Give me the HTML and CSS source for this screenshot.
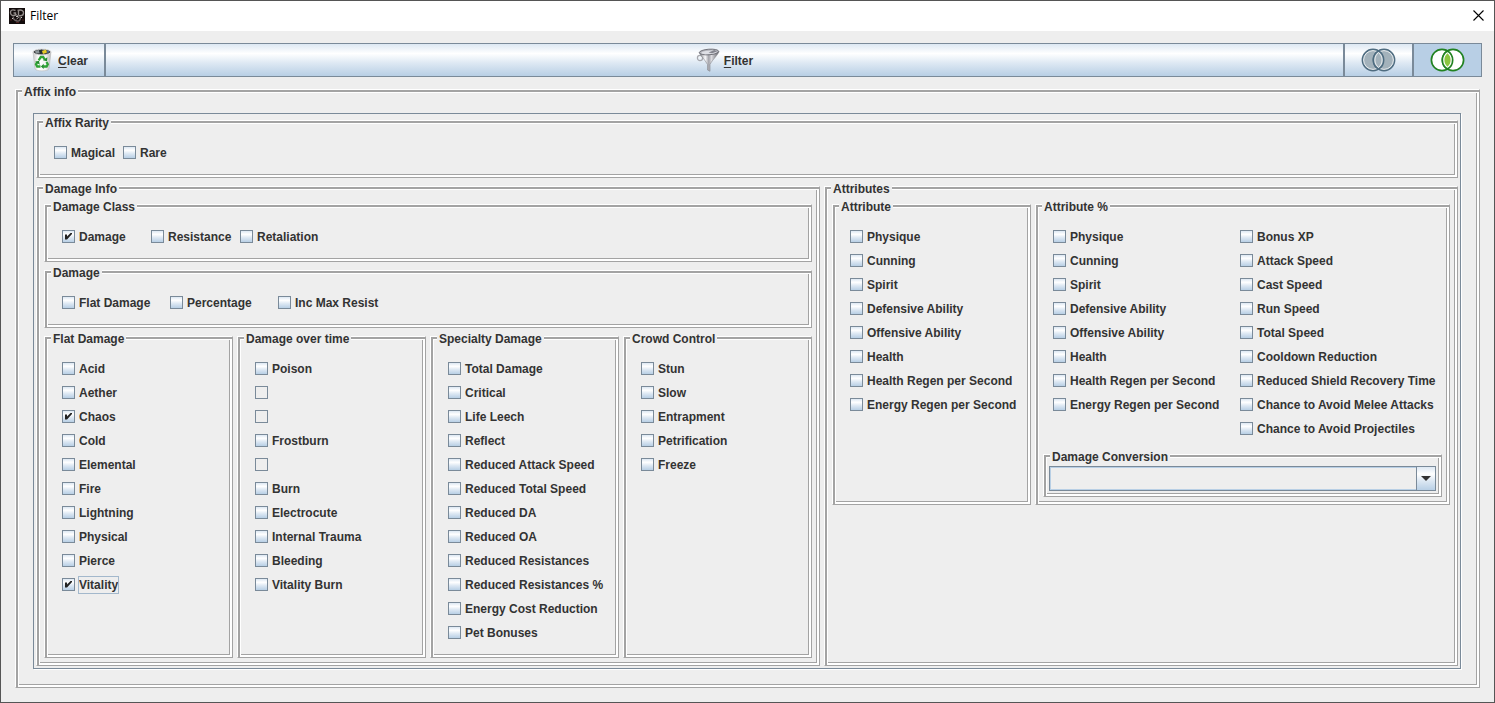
FILE: index.html
```html
<!DOCTYPE html>
<html lang="en">
<head>
<meta charset="utf-8">
<title>Filter</title>
<link rel="stylesheet" href="styles.css">
</head>
<body>
<div class="window">
  <header class="titlebar">
    <svg class="app-icon" viewBox="0 0 16 16" aria-hidden="true">
      <rect width="16" height="16" fill="#120c0c"/>
      <g fill="none" stroke="#918b89" stroke-width="1.4">
        <path d="M6.500 2.500C3 1 1.200 2.500 1.500 5S4 8 6.500 7V5H4.500"/>
        <path d="M9.500 2.500V7.500M8.500 2.500C13 1.200 15 3 14.500 5.500S12 8 9.500 7.500"/>
        <path d="M4.500 8.500c-1 2 1 4 3.500 4.500s4-1.500 3-4" stroke="#6b6262"/>
        <path d="M7.500 6.500l2 3-2 1.500" stroke="#aaa5a3" stroke-width="1"/>
      </g>
      <path d="M7 8h2v1H7zM12 9h1v1h-1zM3 10h1v1H3z" fill="#c9c4c2"/>
      <path d="M1 12h2M13 12h2M7 14.500h3" stroke="#4d2020"/>
    </svg>
    <h1 class="title">Filter</h1>
    <button class="close" type="button" aria-label="Close">
      <svg viewBox="0 0 11 11" width="11" height="11"><path d="M.5.5l10 10M10.500.5l-10 10" fill="none" stroke="#000" stroke-width="1.1"/></svg>
    </button>
  </header>

  <main class="content">
    <div class="toolbar">
      <button class="tool clear" type="button">
        <svg viewBox="0 0 24 24" width="24" height="24" aria-hidden="true">
          <defs><linearGradient id="bin" x1="0" x2="1"><stop offset="0" stop-color="#c9c9c9"/><stop offset=".3" stop-color="#fff"/><stop offset=".7" stop-color="#f3f3f3"/><stop offset="1" stop-color="#b5b5b5"/></linearGradient></defs>
          <path d="M3 4l2 17c1 2.500 13 2.500 14 0l2-17z" fill="url(#bin)" stroke="#b9bbbc" stroke-width=".6"/>
          <ellipse cx="12" cy="4" rx="9" ry="2.900" fill="#45484a" stroke="#d8d8d8"/>
          <path d="M5 3l4-1 1 3-4 .5z" fill="#8d9699"/><path d="M9 2.500l3-1 1 4-3 .5z" fill="#253032"/>
          <path d="M12 3l4-1.500 1 3-4 1.500z" fill="#e6cb28"/><path d="M17 2.500l2.500 1-2 1.500z" fill="#4f77a8"/>
          <g fill="none" stroke="#2fa336" stroke-width="2.300">
            <path d="M8.700 12.300l2.100-3.300h2.400l1.500 2.500"/>
            <path d="M16.500 14l1.300 2.300-1.200 2.200h-3.400"/>
            <path d="M10.500 18.500H7.200L6 16.300l1.300-2.100"/>
          </g>
          <path d="M12.900 12.200l4.100 1 .4-4zM13.700 15.800v5.200l-2.800-2.600zM5 13.700l4-.9.8 4z" fill="#218c2b"/>
        </svg>
        <span><u>C</u>lear</span>
      </button>
      <button class="tool filter" type="button">
        <svg viewBox="0 0 24 24" width="24" height="24" aria-hidden="true">
          <defs><linearGradient id="steel" x1="0" x2="1"><stop offset="0" stop-color="#77777e"/><stop offset=".3" stop-color="#fafafc"/><stop offset=".48" stop-color="#a2a2a9"/><stop offset=".62" stop-color="#dcdce0"/><stop offset="1" stop-color="#5c5c63"/></linearGradient></defs>
          <circle cx="4" cy="10" r="2.600" fill="none" stroke="#a6a7ad" stroke-width="1.200"/>
          <path d="M3.300 4.500c1 3 5.500 7 8.200 12v5.500l2.500 1.300V16.500c2.500-5 8-9.500 9-13z" fill="url(#steel)" stroke="#85868d" stroke-width=".6"/>
          <g transform="rotate(-4 13 4)">
            <ellipse cx="13" cy="4" rx="9.700" ry="2.800" fill="#b4b5bc" stroke="#6c6d75" stroke-width=".9"/>
            <ellipse cx="13" cy="4.400" rx="7.800" ry="1.700" fill="#dedfe5"/>
            <path d="M12.500 4.500l6-2 2.500 1.500-5 1.500z" fill="#85868f"/>
          </g>
        </svg>
        <span><u>F</u>ilter</span>
      </button>
      <button class="tool mode" type="button" aria-label="Match any" aria-pressed="false">
        <svg viewBox="0 0 35 24" width="35" height="24">
          <g fill="#a3b2bb" stroke="#4e6c80" stroke-width="1.600"><circle cx="12" cy="12" r="10.600"/><circle cx="23" cy="12" r="10.600"/></g>
          <g fill="none" stroke="#fff" stroke-width=".8"><circle cx="12" cy="12" r="9.400"/><circle cx="23" cy="12" r="9.400"/></g>
          <path d="M17.500 2.900a10.600 10.600 0 0 1 0 18.200a10.600 10.600 0 0 1 0-18.200z" fill="#a3b2bb" stroke="#4e6c80" stroke-width="1.600"/>
          <path d="M17.500 4.600a9.400 9.400 0 0 1 0 14.800a9.400 9.400 0 0 1 0-14.800z" fill="none" stroke="#fff" stroke-width=".8"/>
        </svg>
      </button>
      <button class="tool mode pressed" type="button" aria-label="Match all" aria-pressed="true">
        <svg viewBox="0 0 35 24" width="35" height="24">
          <g fill="#fff" stroke="#218221" stroke-width="1.700"><circle cx="12" cy="12" r="10.600"/><circle cx="23" cy="12" r="10.600"/></g>
          <path d="M17.500 2.900a10.600 10.600 0 0 1 0 18.200a10.600 10.600 0 0 1 0-18.200z" fill="#fff" stroke="#218221" stroke-width="1.700"/>
          <path d="M17.500 5.200a9 9 0 0 1 0 13.600a9 9 0 0 1 0-13.600z" fill="#8cc540"/>
        </svg>
      </button>
    </div>

    <fieldset class="group affix-info">
      <legend>Affix info</legend>
      <div class="panel">
        <fieldset class="group options rarity">
          <legend>Affix Rarity</legend>
          <label class="check"><input type="checkbox"><span>Magical</span></label>
          <label class="check"><input type="checkbox"><span>Rare</span></label>
        </fieldset>

        <div class="columns">
          <fieldset class="group nest damage-info">
            <legend>Damage Info</legend>
            <fieldset class="group options damage-class">
              <legend>Damage Class</legend>
              <label class="check"><input type="checkbox" checked><span>Damage</span></label>
              <label class="check"><input type="checkbox"><span>Resistance</span></label>
              <label class="check"><input type="checkbox"><span>Retaliation</span></label>
            </fieldset>
            <fieldset class="group options damage-kind">
              <legend>Damage</legend>
              <label class="check"><input type="checkbox"><span>Flat Damage</span></label>
              <label class="check"><input type="checkbox"><span>Percentage</span></label>
              <label class="check"><input type="checkbox"><span>Inc Max Resist</span></label>
            </fieldset>
            <div class="types">
              <fieldset class="group options">
                <legend>Flat Damage</legend>
                <label class="check"><input type="checkbox"><span>Acid</span></label>
                <label class="check"><input type="checkbox"><span>Aether</span></label>
                <label class="check"><input type="checkbox" checked><span>Chaos</span></label>
                <label class="check"><input type="checkbox"><span>Cold</span></label>
                <label class="check"><input type="checkbox"><span>Elemental</span></label>
                <label class="check"><input type="checkbox"><span>Fire</span></label>
                <label class="check"><input type="checkbox"><span>Lightning</span></label>
                <label class="check"><input type="checkbox"><span>Physical</span></label>
                <label class="check"><input type="checkbox"><span>Pierce</span></label>
                <label class="check focused"><input type="checkbox" checked><span>Vitality</span></label>
              </fieldset>
              <fieldset class="group options">
                <legend>Damage over time</legend>
                <label class="check"><input type="checkbox"><span>Poison</span></label>
                <label class="check"><input type="checkbox" disabled aria-label="Unavailable"></label>
                <label class="check"><input type="checkbox" disabled aria-label="Unavailable"></label>
                <label class="check"><input type="checkbox"><span>Frostburn</span></label>
                <label class="check"><input type="checkbox" disabled aria-label="Unavailable"></label>
                <label class="check"><input type="checkbox"><span>Burn</span></label>
                <label class="check"><input type="checkbox"><span>Electrocute</span></label>
                <label class="check"><input type="checkbox"><span>Internal Trauma</span></label>
                <label class="check"><input type="checkbox"><span>Bleeding</span></label>
                <label class="check"><input type="checkbox"><span>Vitality Burn</span></label>
              </fieldset>
              <fieldset class="group options">
                <legend>Specialty Damage</legend>
                <label class="check"><input type="checkbox"><span>Total Damage</span></label>
                <label class="check"><input type="checkbox"><span>Critical</span></label>
                <label class="check"><input type="checkbox"><span>Life Leech</span></label>
                <label class="check"><input type="checkbox"><span>Reflect</span></label>
                <label class="check"><input type="checkbox"><span>Reduced Attack Speed</span></label>
                <label class="check"><input type="checkbox"><span>Reduced Total Speed</span></label>
                <label class="check"><input type="checkbox"><span>Reduced DA</span></label>
                <label class="check"><input type="checkbox"><span>Reduced OA</span></label>
                <label class="check"><input type="checkbox"><span>Reduced Resistances</span></label>
                <label class="check"><input type="checkbox"><span>Reduced Resistances %</span></label>
                <label class="check"><input type="checkbox"><span>Energy Cost Reduction</span></label>
                <label class="check"><input type="checkbox"><span>Pet Bonuses</span></label>
              </fieldset>
              <fieldset class="group options">
                <legend>Crowd Control</legend>
                <label class="check"><input type="checkbox"><span>Stun</span></label>
                <label class="check"><input type="checkbox"><span>Slow</span></label>
                <label class="check"><input type="checkbox"><span>Entrapment</span></label>
                <label class="check"><input type="checkbox"><span>Petrification</span></label>
                <label class="check"><input type="checkbox"><span>Freeze</span></label>
              </fieldset>
            </div>
          </fieldset>

          <fieldset class="group nest attributes">
            <legend>Attributes</legend>
            <div class="attribute-columns">
              <fieldset class="group options">
                <legend>Attribute</legend>
                <label class="check"><input type="checkbox"><span>Physique</span></label>
                <label class="check"><input type="checkbox"><span>Cunning</span></label>
                <label class="check"><input type="checkbox"><span>Spirit</span></label>
                <label class="check"><input type="checkbox"><span>Defensive Ability</span></label>
                <label class="check"><input type="checkbox"><span>Offensive Ability</span></label>
                <label class="check"><input type="checkbox"><span>Health</span></label>
                <label class="check"><input type="checkbox"><span>Health Regen per Second</span></label>
                <label class="check"><input type="checkbox"><span>Energy Regen per Second</span></label>
              </fieldset>
              <fieldset class="group percent">
                <legend>Attribute %</legend>
                <div class="percent-lists">
                  <div>
                    <label class="check"><input type="checkbox"><span>Physique</span></label>
                    <label class="check"><input type="checkbox"><span>Cunning</span></label>
                    <label class="check"><input type="checkbox"><span>Spirit</span></label>
                    <label class="check"><input type="checkbox"><span>Defensive Ability</span></label>
                    <label class="check"><input type="checkbox"><span>Offensive Ability</span></label>
                    <label class="check"><input type="checkbox"><span>Health</span></label>
                    <label class="check"><input type="checkbox"><span>Health Regen per Second</span></label>
                    <label class="check"><input type="checkbox"><span>Energy Regen per Second</span></label>
                  </div>
                  <div>
                    <label class="check"><input type="checkbox"><span>Bonus XP</span></label>
                    <label class="check"><input type="checkbox"><span>Attack Speed</span></label>
                    <label class="check"><input type="checkbox"><span>Cast Speed</span></label>
                    <label class="check"><input type="checkbox"><span>Run Speed</span></label>
                    <label class="check"><input type="checkbox"><span>Total Speed</span></label>
                    <label class="check"><input type="checkbox"><span>Cooldown Reduction</span></label>
                    <label class="check"><input type="checkbox"><span>Reduced Shield Recovery Time</span></label>
                    <label class="check"><input type="checkbox"><span>Chance to Avoid Melee Attacks</span></label>
                    <label class="check"><input type="checkbox"><span>Chance to Avoid Projectiles</span></label>
                  </div>
                </div>
                <fieldset class="group conversion">
                  <legend id="conversion-label">Damage Conversion</legend>
                  <div class="combo"><select aria-labelledby="conversion-label"><option></option></select></div>
                </fieldset>
              </fieldset>
            </div>
          </fieldset>
        </div>
      </div>
    </fieldset>
  </main>
</div>
</body>
</html>
```
FILE: styles.css
```css
:root {
  --bg: #eeeeee;
  --line: #a3a3a3;
  --edge: #7a8a99;
  --blue: #b8cfe5;
  --metal: linear-gradient(#dde8f3 0%, #ffffff 30%, #dde8f3 60%, #b8cfe5 100%);
}

*,
*::before,
*::after {
  box-sizing: border-box;
}

body {
  margin: 0;
  font: bold 12px/16px "Liberation Sans", Arial, sans-serif;
  color: #333333;
  background: var(--bg);
}

.window {
  display: flex;
  flex-direction: column;
  min-height: 100vh;
  border: 1px solid #555555;
}

.titlebar {
  display: flex;
  align-items: center;
  height: 30px;
  padding: 0 10px 0 8px;
  background: #ffffff;
}

.app-icon {
  width: 16px;
  height: 16px;
}

.title {
  flex: 1;
  margin: 0 0 0 5px;
  font: 12px/16px "Open Sans", "Noto Sans", sans-serif;
  color: #000000;
}

.close {
  display: flex;
  padding: 0 0 2px;
  border: 0;
  background: none;
}

.content {
  flex: 1;
  display: flex;
  flex-direction: column;
  gap: 12px;
  padding: 12px;
}

/* Toolbar */
.toolbar {
  display: flex;
  height: 34px;
}

.tool {
  display: flex;
  align-items: center;
  justify-content: center;
  gap: 4px;
  padding: 0;
  border: 1px solid var(--edge);
  background: var(--metal);
  font: inherit;
  color: inherit;
}

.tool span {
  padding-top: 2px;
}

.tool u {
  text-underline-offset: 2px;
}

.clear {
  width: 92px;
}

.filter {
  flex: 1;
}

.mode {
  width: 69px;
}

.pressed {
  background: var(--blue);
}

/* Titled groups: a raised edge round a lowered one */
.group {
  position: relative;
  min-width: 0;
  margin: 0;
  padding: 0;
  border: 1px solid;
  border-color: #ffffff var(--line) var(--line) #ffffff;
  box-shadow:
    inset 2px 2px 0 var(--line),
    inset -2px -2px 0 #ffffff,
    inset 3px 3px 0 #ffffff,
    inset -3px -3px 0 var(--line);
}

.group > legend {
  position: absolute;
  top: -6px;
  left: 6px;
  padding: 0 2px;
  background: var(--bg);
  white-space: nowrap;
}

.affix-info {
  flex: 1;
  display: flex;
  margin: 0 2px 2px;
  padding: 23px 18px 18px 17px;
}

.affix-info > .panel {
  flex: 1;
  display: flex;
  flex-direction: column;
  gap: 8px;
  min-width: 0;
  padding: 6px 2px 2px;
  border: 1px solid var(--edge);
  box-shadow: 1px 1px 0 #ffffff;
}

.options {
  padding: 19px 4px 13px 17px;
}

.nest {
  padding: 17px 7px 7px;
}

.rarity,
.damage-class,
.damage-kind {
  display: grid;
}

.rarity {
  grid-template-columns: repeat(2, 69px);
}

.damage-class {
  grid-template-columns: repeat(3, 89px);
}

.damage-kind {
  grid-template-columns: repeat(3, 108px);
}

.columns {
  flex: 1;
  display: grid;
  grid-template-columns: minmax(0, 784fr) minmax(0, 634fr);
  gap: 4px;
}

.damage-info {
  display: flex;
  flex-direction: column;
  gap: 8px;
}

.types {
  flex: 1;
  display: grid;
  grid-template-columns: repeat(4, minmax(0, 1fr));
  gap: 4px;
}

.attribute-columns {
  display: grid;
  grid-template-columns: minmax(0, 199fr) minmax(0, 415fr);
  gap: 4px;
}

.percent {
  padding: 19px 7px 7px;
}

.percent-lists {
  display: grid;
  grid-template-columns: 187px 1fr;
  padding-left: 10px;
}

.conversion {
  margin-top: 14px;
  padding: 11px 5px 5px;
}

/* Check boxes */
.check {
  display: flex;
  align-items: center;
  gap: 4px;
  height: 24px;
  white-space: nowrap;
}

.check span {
  margin-top: 2px;
}

.check input {
  appearance: none;
  flex: none;
  display: grid;
  place-items: center;
  width: 13px;
  height: 13px;
  margin: 0;
  border: 1px solid var(--edge);
  background: var(--metal);
}

.check input:disabled {
  background: none;
}

.check input:checked::before {
  content: "";
  width: 7px;
  height: 7px;
  background: #222222;
  clip-path: polygon(0 29%, 29% 29%, 29% 57%, 86% 0, 100% 0, 100% 22%, 29% 100%, 0 100%);
}

.focused span {
  outline: 1px solid #a3b8cc;
}

/* Drop-down */
.combo {
  position: relative;
  display: flex;
}

.combo select {
  appearance: none;
  flex: 1;
  height: 25px;
  padding: 0 24px 0 4px;
  border: 1px solid var(--edge);
  border-radius: 0;
  box-shadow: inset 0 0 0 1px var(--blue);
  background: var(--bg);
  font: inherit;
  color: inherit;
}

.combo::before {
  content: "";
  position: absolute;
  inset: 0 0 0 auto;
  width: 20px;
  border: 1px solid var(--edge);
  background: var(--metal);
  pointer-events: none;
}

.combo::after {
  content: "";
  position: absolute;
  top: 10px;
  right: 5px;
  border: 5px solid transparent;
  border-top-color: #333333;
  border-bottom: 0;
  pointer-events: none;
}
```
